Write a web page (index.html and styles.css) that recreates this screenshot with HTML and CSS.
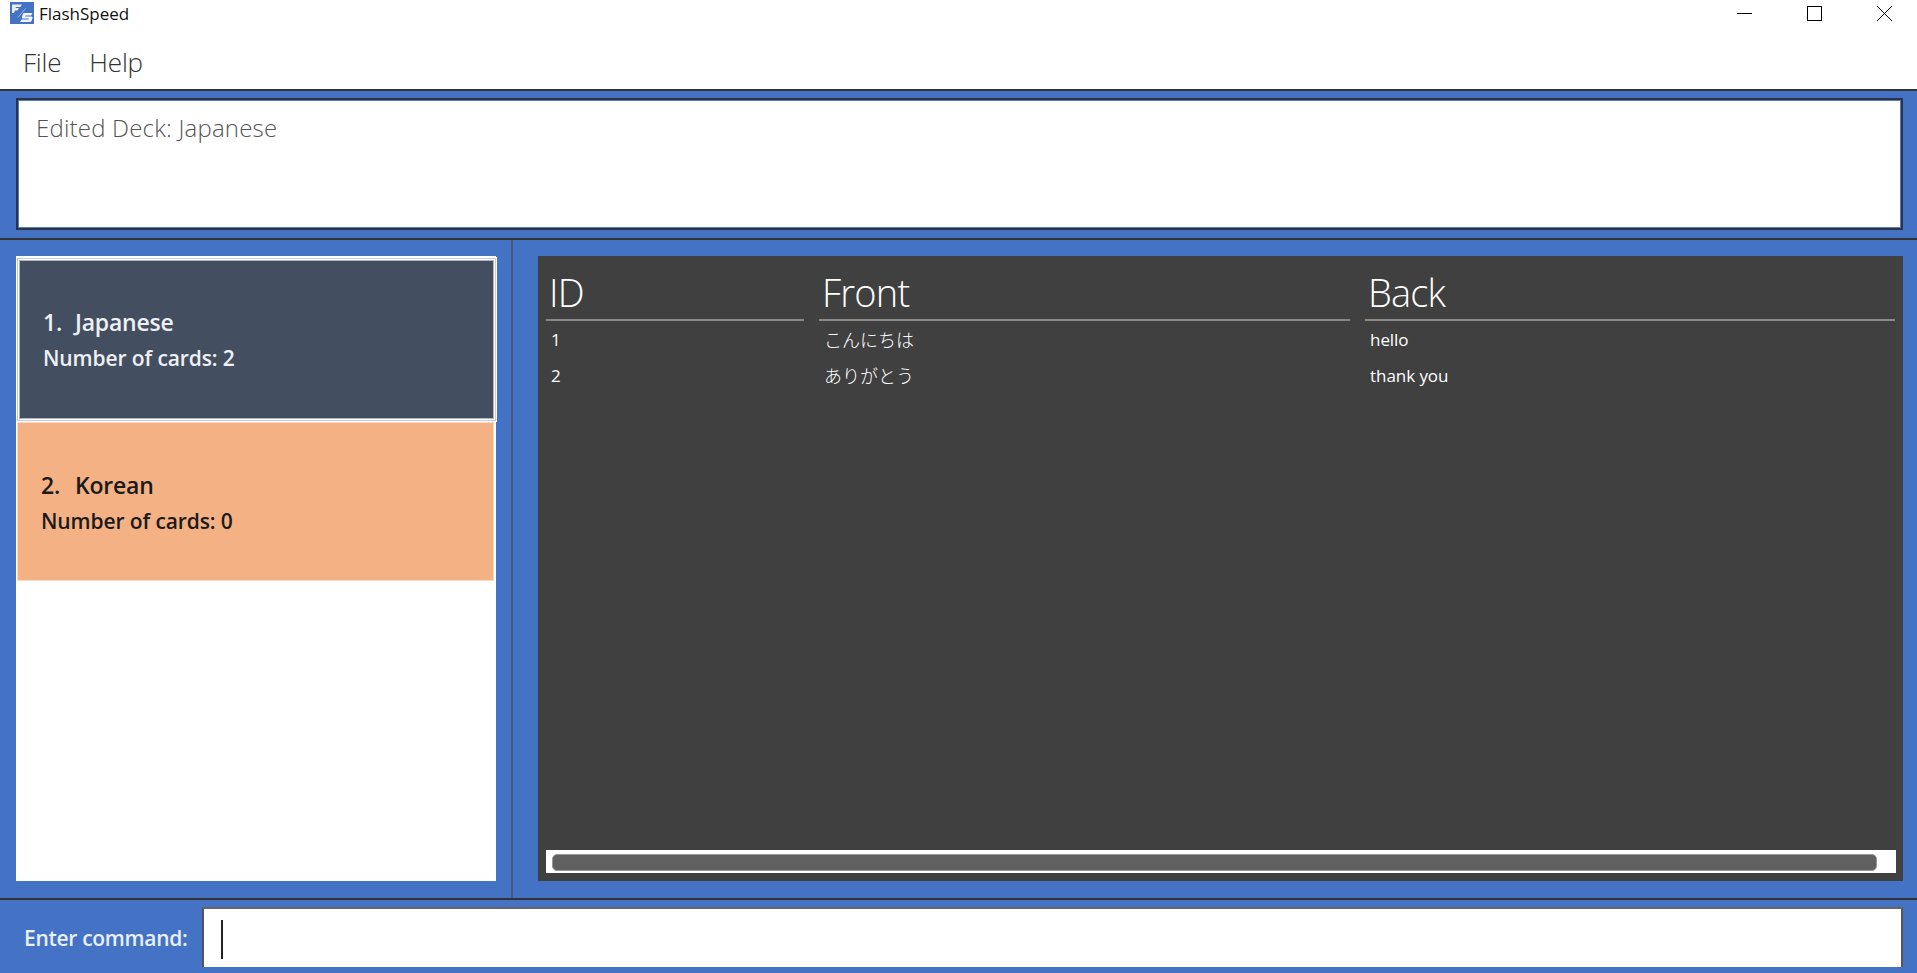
FILE: index.html
```html
<!DOCTYPE html>
<html>
  <head>
    <title>FlashSpeed</title>
    <link rel="stylesheet" href="styles.css">
  </head>
  <body>
    <div class="title-bar">
      <svg class="app-logo" width="24" height="22" viewBox="0 0 24 22">
        <rect width="24" height="22" fill="#4472c4"/>
        <path d="M2 2.500h10l-1.500 2.500H6L5.500 6H9L7.500 8.500H5L4 11H2z" fill="#e6ecf8"/>
        <path d="M8 15.500L15.500 6.500" stroke="#a3b8e3" stroke-width="1"/>
        <path d="M14 11h8.500l-1.500 2.500h-5.500l-.5 1h6.500q1.500 0 1 1.500l-1 3q-.5 1-2 1H10l1.500-2.500h7l.5-1h-6q-1.500 0-1-1.500l.5-2q.5-2 1.500-2z" fill="#f4f6fb"/>
      </svg>
      <span class="app-name">FlashSpeed</span>
      <div class="window-buttons">
        <svg width="15" height="15" viewBox="0 0 15 15"><path d="M0 7.500h15" stroke="#000"/></svg>
        <svg width="15" height="15" viewBox="0 0 15 15"><rect x="0.500" y="0.500" width="14" height="14" fill="none" stroke="#000"/></svg>
        <svg width="15" height="15" viewBox="0 0 15 15"><path d="M0 0L15 15M15 0L0 15" stroke="#000"/></svg>
      </div>
    </div>

    <div class="menu-bar">
      <span class="menu-item">File</span>
      <span class="menu-item">Help</span>
    </div>

    <div class="result-section">
      <div class="result-box">Edited Deck: Japanese</div>
    </div>

    <div class="main-section">
      <div class="deck-column">
        <div class="deck-list">
          <div class="deck-card selected">
            <div class="deck-title"><span class="deck-index">1.</span>Japanese</div>
            <div class="deck-count">Number of cards: 2</div>
          </div>
          <div class="deck-card">
            <div class="deck-title"><span class="deck-index">2.</span>Korean</div>
            <div class="deck-count">Number of cards: 0</div>
          </div>
        </div>
      </div>
      <div class="table-column">
        <div class="table-panel">
          <div class="table-head">
            <div class="head-cell">ID</div>
            <div class="head-cell">Front</div>
            <div class="head-cell">Back</div>
          </div>
          <div class="table-row">
            <div class="cell">1</div>
            <div class="cell cell-jp">こんにちは</div>
            <div class="cell">hello</div>
          </div>
          <div class="table-row">
            <div class="cell">2</div>
            <div class="cell cell-jp">ありがとう</div>
            <div class="cell">thank you</div>
          </div>
          <div class="table-space"></div>
          <div class="scroll-track"><div class="scroll-thumb"></div></div>
        </div>
      </div>
    </div>

    <div class="command-section">
      <label class="command-label">Enter command:</label>
      <div class="command-box"><span class="caret"></span></div>
    </div>
  </body>
</html>
```

FILE: styles.css
```css
body {
  display: flex;
  flex-direction: column;
  height: 100vh;
  margin: 0;
  overflow: hidden;
  background-color: #4472c4;
  font-family: "Open Sans", "Noto Sans CJK JP", sans-serif;
}

.title-bar {
  display: flex;
  align-items: center;
  height: 26px;
  padding: 0 25px 8px 10px;
  background-color: white;
}

.app-name {
  margin-left: 5px;
  font-size: 17px;
  color: #111;
}

.window-buttons {
  display: flex;
  gap: 55px;
  margin-left: auto;
}

.menu-bar {
  display: flex;
  align-items: center;
  gap: 28px;
  height: 55px;
  padding: 0 23px;
  background-color: white;
}

.menu-item {
  font-size: 26px;
  font-weight: 300;
  letter-spacing: -0.2px;
  color: #333;
}

.result-section {
  height: 132px;
  padding: 7px 14px 8px 16px;
  border-top: 2px solid #333;
}

.result-box {
  height: 100%;
  padding: 11px 18px;
  box-sizing: border-box;
  border: 2px solid #2d3345;
  box-shadow: inset 0 0 0 1px #4f7bd0;
  background-color: white;
  font-size: 24px;
  font-weight: 300;
  letter-spacing: 0.2px;
  color: #555;
}

.main-section {
  display: flex;
  height: 658px;
  border-top: 2px solid #333;
}

.deck-column {
  width: 513px;
  padding: 16px 15px 16px 16px;
  box-sizing: border-box;
  border-right: 2px solid #4a5a7a;
}

.deck-list {
  display: flex;
  flex-direction: column;
  height: 625px;
  background-color: white;
}

.deck-card {
  display: flex;
  flex-direction: column;
  justify-content: center;
  gap: 6px;
  height: 159px;
  margin: 0 2px 0 1px;
  padding: 0 23px;
  box-sizing: border-box;
  border: 1px solid #fbd8c0;
  background-color: #f4b183;
  color: #1a1a1a;
  font-weight: 600;
  font-size: 21px;
  letter-spacing: -0.1px;
}

.deck-card.selected {
  margin: 4px 2px 3px 3px;
  padding: 0 23px 2px;
  border: 1px solid #aeb4c0;
  box-shadow: 0 0 0 1px white, 0 0 0 2px #c5cddd, 0 0 0 3px white;
  background-color: #434f61;
  color: #eef0f4;
}

.deck-index {
  display: inline-block;
  width: 34px;
}

.selected .deck-index {
  width: 32px;
}

.deck-title {
  font-size: 23px;
  letter-spacing: -0.2px;
}

.table-column {
  flex: 1;
  padding: 16px 14px 16px 25px;
}

.table-panel {
  display: flex;
  flex-direction: column;
  height: 625px;
  padding: 0 7px 8px 8px;
  box-sizing: border-box;
  background-color: #404040;
  color: white;
}

.table-head,
.table-row {
  display: grid;
  grid-template-columns: 258px 531px 530px;
  column-gap: 15px;
}

.head-cell {
  height: 65px;
  padding: 9px 0 0 3px;
  box-sizing: border-box;
  border-bottom: 2px solid #8a8a8a;
  font-size: 38px;
  font-weight: 300;
  letter-spacing: -0.8px;
  line-height: 54px;
}

.table-row {
  height: 36px;
  align-items: center;
}

.cell {
  padding-left: 5px;
  font-size: 17px;
  letter-spacing: -0.05px;
}

.cell-jp {
  font-size: 18px;
  font-weight: 300;
  letter-spacing: 0;
  color: white;
}

.table-space {
  flex: 1;
}

.scroll-track {
  height: 23px;
  padding: 4px 19px 2px 6px;
  box-sizing: border-box;
  background-color: white;
}

.scroll-thumb {
  height: 17px;
  box-sizing: border-box;
  border: 1px solid #999;
  border-radius: 5px;
  background-color: #606060;
}

.command-section {
  display: flex;
  flex: 1;
  align-items: flex-start;
  padding: 7px 14px 0 24px;
  border-top: 2px solid #333;
}

.command-label {
  width: 178px;
  padding-top: 17px;
  font-size: 21px;
  font-weight: 600;
  letter-spacing: -0.3px;
  color: #e8eefa;
}

.command-box {
  flex: 1;
  height: 60px;
  padding: 11px 17px;
  box-sizing: border-box;
  border-top: 2px solid #666;
  border-left: 2px solid #555;
  border-right: 2px solid #555;
  background-color: white;
}

.caret {
  display: block;
  width: 2px;
  height: 39px;
  background-color: #222;
}
```
